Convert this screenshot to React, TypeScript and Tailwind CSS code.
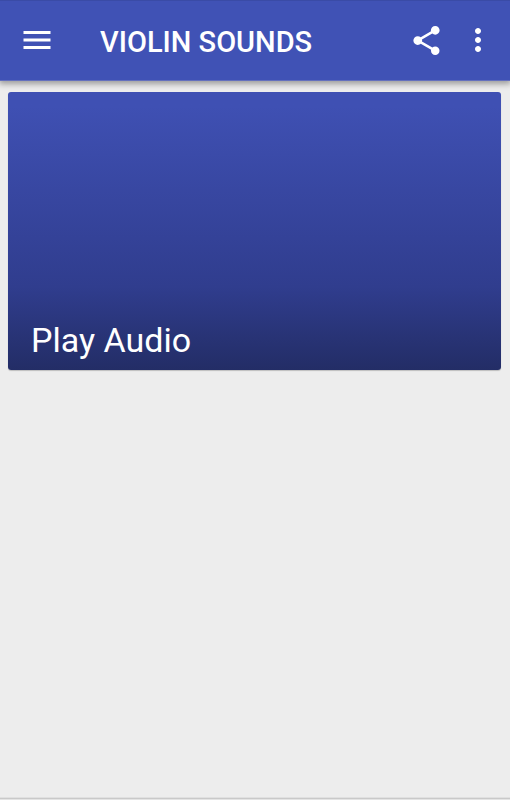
import { MdMenu, MdMoreVert, MdShare } from "react-icons/md";

const cards = [{ id: "play", title: "Play Audio" }];

function Toolbar() {
  return (
    <header className="relative flex h-[81px] items-center border-t border-b border-t-[#3a4ba6] border-b-[#6470bd] bg-[#4052b5] pr-3.5 pb-px pl-[19px] text-white shadow-[0_2px_6px_1px_rgba(0,0,0,0.35)]">
      <button type="button" aria-label="Open menu" className="shrink-0">
        <MdMenu size={36} />
      </button>
      <h1 className="ml-[45px] flex-1 truncate pt-[3px] text-[29px] leading-9 font-medium">
        VIOLIN SOUNDS
      </h1>
      <button type="button" aria-label="Share" className="shrink-0">
        <MdShare size={35} />
      </button>
      <button type="button" aria-label="More options" className="ml-4 shrink-0">
        <MdMoreVert size={36} />
      </button>
    </header>
  );
}

function SoundCard({ title }: { title: string }) {
  return (
    <button
      type="button"
      className="flex h-[278px] w-full items-end rounded-[3px] bg-linear-to-b from-[#3f50b3] from-5% via-[#303d8e] via-70% to-[#232d66] px-[23px] pb-2.5 text-left text-[34px] leading-10 text-white shadow-[0_1px_1px_rgba(0,0,0,0.2)]"
    >
      {title}
    </button>
  );
}

export default function App() {
  return (
    <div className="flex min-h-screen flex-col bg-[#ededed] font-[Roboto,sans-serif]">
      <Toolbar />
      <main className="flex flex-1 flex-col gap-3 pt-[11px] pr-[9px] pl-2">
        {cards.map((card) => (
          <SoundCard key={card.id} title={card.title} />
        ))}
      </main>
      <footer className="h-[3px] border-t border-b border-t-[#e0e0e0] border-b-[#e4e4e4] bg-[#c9c9c9]" />
    </div>
  );
}
